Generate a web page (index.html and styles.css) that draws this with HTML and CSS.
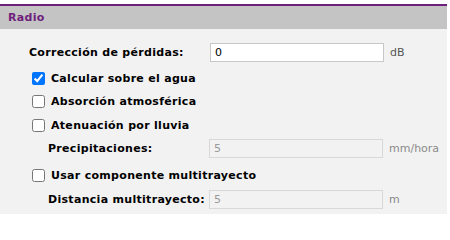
FILE: index.html
```html
<!DOCTYPE html>
<html lang="es">
<head>
<meta charset="utf-8">
<link rel="stylesheet" href="styles.css">
</head>
<body>
<div class="panel">
  <div class="panel-header">Radio</div>
  <div class="panel-body">
    <div class="row row-main">
      <label class="label label-main">Corrección de pérdidas:</label>
      <input class="field" type="text" value="0">
      <span class="unit">dB</span>
    </div>
    <div class="row row-check row-first">
      <input class="check" type="checkbox" checked>
      <span class="label">Calcular sobre el agua</span>
    </div>
    <div class="row row-check row-short">
      <input class="check" type="checkbox">
      <span class="label">Absorción atmosférica</span>
    </div>
    <div class="row row-check">
      <input class="check" type="checkbox">
      <span class="label">Atenuación por lluvia</span>
    </div>
    <div class="row row-sub">
      <label class="label label-sub">Precipitaciones:</label>
      <input class="field field-disabled" type="text" value="5" disabled>
      <span class="unit unit-disabled">mm/hora</span>
    </div>
    <div class="row row-check row-spaced">
      <input class="check" type="checkbox">
      <span class="label">Usar componente multitrayecto</span>
    </div>
    <div class="row row-sub row-last">
      <label class="label label-sub">Distancia multitrayecto:</label>
      <input class="field field-disabled" type="text" value="5" disabled>
      <span class="unit unit-disabled">m</span>
    </div>
  </div>
</div>
</body>
</html>
```
FILE: styles.css
```css
html, body {
  margin: 0;
  padding: 0;
  background: #ffffff;
}
body {
  font-family: "DejaVu Sans", Verdana, sans-serif;
  font-size: 11px;
  color: #000;
}
.panel {
  width: 447px;
  margin-top: 4px;
  border-top: 2px solid #6e1f7c;
  background: #f2f2f2;
  height: 208px;
}
.panel-header {
  height: 23px;
  background: #c4c4c4;
  color: #6e1f7c;
  font-weight: bold;
  font-size: 11px;
  letter-spacing: 0.3px;
  padding-left: 8px;
  display: flex;
  align-items: center;
}
.panel-body {
  padding-top: 11px;
  display: flex;
  flex-direction: column;
}
.row {
  display: flex;
  align-items: center;
}
.row-main {
  height: 24px;
  padding-left: 29px;
}
.row-check {
  height: 24px;
  padding-left: 32px;
}
.row-first {
  margin-top: 2px;
}
.row-short {
  height: 23px;
}
.row-spaced {
  margin-top: 4px;
}
.row-sub {
  height: 22px;
  padding-left: 48px;
}
.row-last {
  margin-top: 1px;
}
.label {
  font-weight: bold;
  letter-spacing: 0.3px;
  white-space: nowrap;
}
.label-main {
  width: 181px;
}
.label-sub {
  width: 161px;
}
.field {
  box-sizing: border-box;
  width: 174px;
  height: 19px;
  margin: 0;
  padding: 0 4px;
  border: 1px solid #c8c8c8;
  background: #ffffff;
  font-family: inherit;
  font-size: 11px;
  color: #000;
  outline: none;
}
.field-disabled {
  background: #f2f2f2;
  border-color: #d8d8d8;
  color: #9a9a9a;
}
.unit {
  margin-left: 6px;
  color: #555;
}
.unit-disabled {
  color: #8a8a8a;
}
.check {
  width: 13px;
  height: 13px;
  margin: 0 6px 0 0;
}
```
